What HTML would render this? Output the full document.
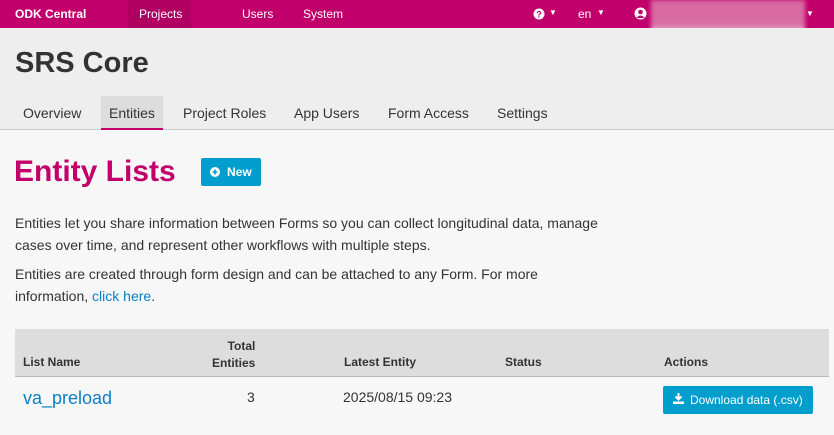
<!DOCTYPE html>
<html><head><style>
*{margin:0;padding:0;box-sizing:border-box}
body{width:834px;height:435px;overflow:hidden;background:#f7f7f7;font-family:"Liberation Sans",Arial,sans-serif;color:#333;position:relative}
.a{position:absolute;white-space:nowrap}
.nav{position:absolute;left:0;top:0;width:834px;height:28px;background:#c2006b}
.nav .a{color:#fff;font-size:12px;top:7px}
.hdr{position:absolute;left:0;top:28px;width:834px;height:102px;background:#eee;border-bottom:1px solid #ccc}
.tab{font-size:14px;color:#333;top:105px}
p{position:absolute;left:15px;font-size:14px;line-height:22px;color:#333}
</style></head><body>
<div class="nav">
<div style="position:absolute;left:128px;top:0;width:63px;height:28px;background:#b00062"></div>
<div class="a" style="left:15px;font-weight:bold">ODK Central</div>
<div class="a" style="left:139px">Projects</div>
<div class="a" style="left:242px">Users</div>
<div class="a" style="left:303px">System</div>
<svg class="a" style="left:533px;top:8px" width="12" height="12"><circle cx="6" cy="6" r="5.5" fill="#fff"/><text x="6" y="9.5" font-size="9" font-weight="bold" text-anchor="middle" fill="#c2006b" font-family="Liberation Sans">?</text></svg>
<div class="a" style="left:549px;top:8px;font-size:8px">▼</div>
<div class="a" style="left:578px">en</div>
<div class="a" style="left:597px;top:8px;font-size:8px">▼</div>
<svg class="a" style="left:634px;top:7px" width="13" height="13"><circle cx="6.5" cy="6.5" r="6" fill="#fff"/><circle cx="6.5" cy="5" r="2.3" fill="#c2006b"/><path d="M2.5 11 Q6.5 6 10.5 11" fill="#c2006b"/></svg>
<div style="position:absolute;left:651px;top:0;width:154px;height:33px;background:linear-gradient(#d86aa3 70%,#e9b7d2);filter:blur(2px)"></div>
<div class="a" style="left:806px;top:9px;font-size:8px">▼</div>
</div>
<div class="hdr"></div>
<div class="a" style="left:15px;top:47px;font-size:29px;font-weight:bold;color:#333">SRS Core</div>
<div style="position:absolute;left:101px;top:96px;width:62px;height:34px;background:#ddd;border-bottom:2px solid #c2006b"></div>
<div class="a tab" style="left:23px">Overview</div>
<div class="a tab" style="left:109px">Entities</div>
<div class="a tab" style="left:183px">Project Roles</div>
<div class="a tab" style="left:294px">App Users</div>
<div class="a tab" style="left:388px">Form Access</div>
<div class="a tab" style="left:497px">Settings</div>
<div class="a" style="left:14px;top:155px;font-size:30px;font-weight:bold;color:#c2006b">Entity Lists</div>
<div style="position:absolute;left:201px;top:158px;width:60px;height:28px;background:#009ecc;border-radius:2px"></div>
<svg class="a" style="left:210px;top:167px" width="10" height="10"><circle cx="5" cy="5" r="5" fill="#fff"/><path d="M5 2.5v5M2.5 5h5" stroke="#009ecc" stroke-width="1.6"/></svg>
<div class="a" style="left:227px;top:165px;font-size:12px;color:#fff;font-weight:bold">New</div>
<p style="top:212px">Entities let you share information between Forms so you can collect longitudinal data, manage<br>cases over time, and represent other workflows with multiple steps.</p>
<p style="top:263px">Entities are created through form design and can be attached to any Form. For more<br>information, <span style="color:#0a7fc2">click here</span>.</p>
<div style="position:absolute;left:15px;top:329px;width:814px;height:48px;background:#ddd;border-bottom:1px solid #bbb"></div>
<div class="a" style="left:23px;top:355px;font-size:12px;font-weight:bold">List Name</div>
<div class="a" style="left:212px;top:338px;font-size:12px;font-weight:bold;text-align:right;line-height:17px">&nbsp;&nbsp;&nbsp;&nbsp;Total<br>Entities</div>
<div class="a" style="left:344px;top:355px;font-size:12px;font-weight:bold">Latest Entity</div>
<div class="a" style="left:505px;top:355px;font-size:12px;font-weight:bold">Status</div>
<div class="a" style="left:664px;top:355px;font-size:12px;font-weight:bold">Actions</div>
<div class="a" style="left:23px;top:388px;font-size:18px;color:#0a7fc2">va_preload</div>
<div class="a" style="left:247px;top:389px;font-size:14px">3</div>
<div class="a" style="left:343px;top:389px;font-size:14px">2025/08/15 09:23</div>
<div style="position:absolute;left:663px;top:386px;width:150px;height:28px;background:#009ecc;border-radius:2px"></div>
<svg class="a" style="left:673px;top:393px" width="11" height="11"><path d="M5.5 0v6M2.5 3.5l3 3 3-3" stroke="#fff" stroke-width="2" fill="none"/><rect x="0" y="8.5" width="11" height="2.5" fill="#fff"/></svg>
<div class="a" style="left:690px;top:393px;font-size:12px;color:#fff">Download data (.csv)</div>
</body></html>
